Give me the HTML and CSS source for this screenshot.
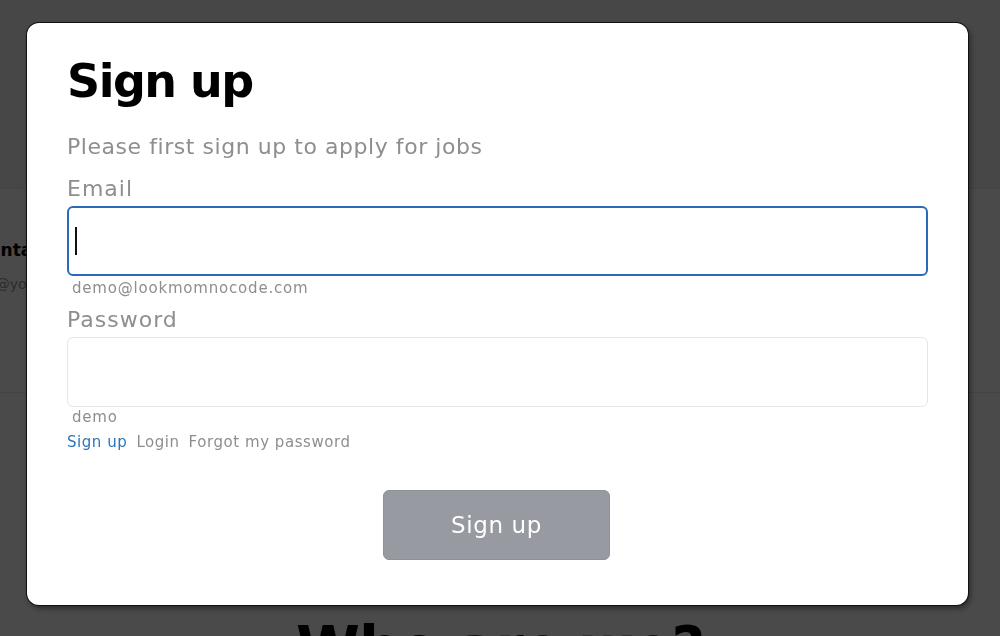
FILE: index.html
```html
<!DOCTYPE html>
<html lang="en">
<head>
<meta charset="utf-8">
<title>Sign up</title>
<link rel="stylesheet" href="styles.css">
</head>
<body>
<div class="page">
  <header class="page-top"></header>
  <section class="cards">
    <div class="track">
      <article class="card">
        <h3 class="card-name">Atlanta</h3>
        <p class="card-mail">hello@yourmail.com</p>
      </article>
      <article class="card card-wide"></article>
    </div>
  </section>
  <h2 class="page-heading">Who are we?</h2>
</div>

<div class="overlay">
  <div class="modal">
    <h1 class="title">Sign up</h1>
    <p class="subtitle">Please first sign up to apply for jobs</p>
    <label class="label" for="email">Email</label>
    <div class="input focused"><span class="caret"></span></div>
    <p class="hint">demo@lookmomnocode.com</p>
    <label class="label label-second" for="password">Password</label>
    <div class="input"></div>
    <p class="hint hint-second">demo</p>
    <nav class="links">
      <a class="link active">Sign up</a>
      <a class="link">Login</a>
      <a class="link">Forgot my password</a>
    </nav>
    <div class="actions">
      <button class="submit">Sign up</button>
    </div>
  </div>
</div>
</body>
</html>
```

FILE: styles.css
```css
* { box-sizing: border-box; }
html, body { margin: 0; padding: 0; }
body {
  width: 1000px;
  height: 636px;
  overflow: hidden;
  font-family: "DejaVu Sans", "Open Sans", sans-serif;
  background: #ffffff;
}
.page { width: 1000px; }
.page-top { height: 188px; background: #f4f4f4; }
.cards {
  height: 205px;
  border-top: 1px solid #e6e6e6;
  border-bottom: 1px solid #e6e6e6;
  overflow: hidden;
}
.track { display: flex; gap: 24px; margin-left: -58px; padding-top: 27px; }
.card {
  width: 85px;
  flex: none;
  height: 150px;
  padding: 24px 0 24px 20px;
  overflow: hidden;
}
.card-wide { width: 1000px; margin-left: 150px; border-left: 1px solid #f0f0f0; }
.card-name { margin: 0; font-size: 17px; font-weight: 700; color: #000; white-space: nowrap; }
.card-mail { margin: 16px 0 0; font-size: 14px; color: #999; white-space: nowrap; }
.page-heading {
  margin: 221px 0 0;
  text-align: center;
  font-size: 58px;
  font-weight: 700;
  color: #000;
  letter-spacing: -1px;
}
.overlay {
  position: fixed;
  inset: 0;
  background: rgba(0, 0, 0, 0.71);
}
.modal {
  position: absolute;
  left: 27px;
  top: 23px;
  width: 941px;
  height: 582px;
  background: #fff;
  border-radius: 12px;
  box-shadow: 0 0 0 1px #111, 2px 3px 6px rgba(0,0,0,0.5);
  padding: 28px 40px 0;
  display: flex;
  flex-direction: column;
}
.title {
  margin: 0;
  font-size: 46px;
  line-height: 60px;
  font-weight: 700;
  color: #000;
  letter-spacing: -1.5px;
}
.subtitle {
  margin: 22px 0 0;
  font-size: 22px;
  line-height: 28px;
  color: #8e8e8e;
  letter-spacing: 0.55px;
}
.label {
  display: block;
  margin-top: 14px;
  font-size: 22px;
  line-height: 28px;
  color: #8e8e8e;
  letter-spacing: 1px;
}
.label-second { margin-top: 9px; }
.input {
  margin-top: 3px;
  height: 70px;
  border: 1px solid #e6e6e6;
  border-radius: 6px;
  display: flex;
  align-items: center;
  padding-left: 7px;
}
.input.focused { border: 2px solid #2a6ab8; padding-left: 6px; }
.caret { width: 2px; height: 28px; background: #111; }
.hint {
  margin: 3px 0 0 5px;
  font-size: 15px;
  line-height: 18px;
  color: #8e8e8e;
  letter-spacing: 0.8px;
}
.hint-second { margin-top: 1px; }
.links {
  display: flex;
  gap: 9px;
  margin-top: 7px;
  font-size: 15px;
  line-height: 18px;
  letter-spacing: 0.55px;
}
.link { color: #8e8e8e; }
.link.active { color: #2a76bd; }
.actions {
  display: flex;
  justify-content: center;
  margin-top: 39px;
  padding-right: 2px;
}
.submit {
  width: 227px;
  height: 70px;
  border: 1px solid #8e9197;
  border-radius: 6px;
  background: #979aa0;
  color: #fff;
  font-family: inherit;
  font-size: 23px;
  letter-spacing: 0.6px;
}
```
